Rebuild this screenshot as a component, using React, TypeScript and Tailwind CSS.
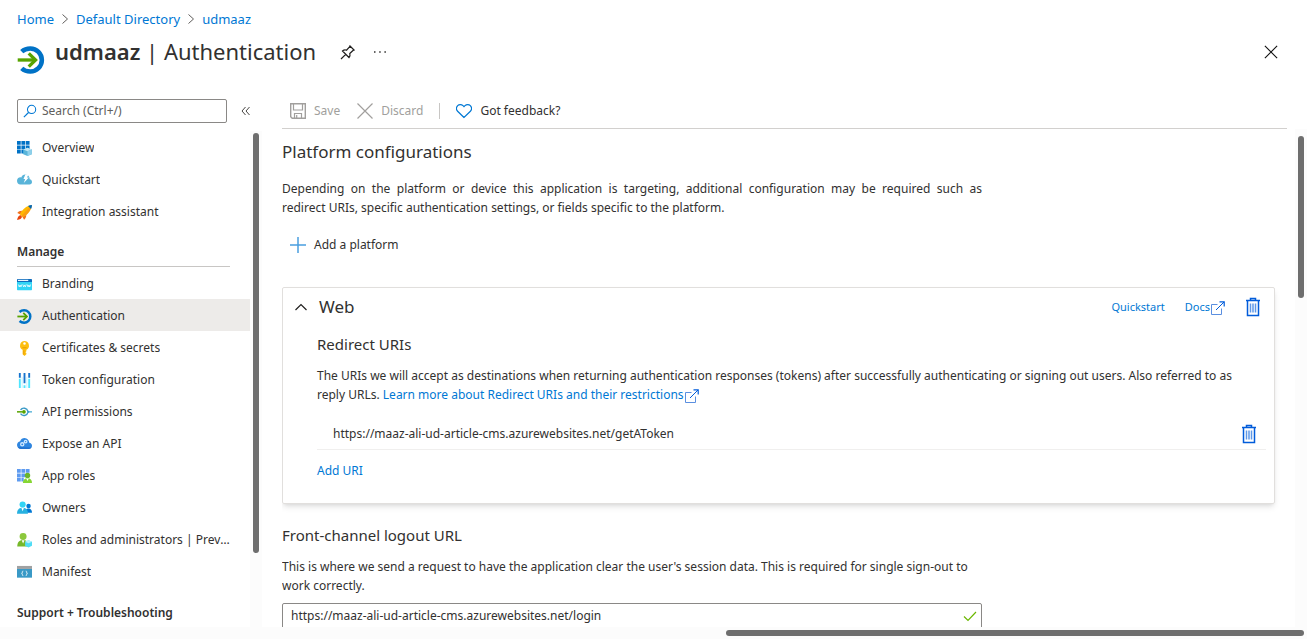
import type { ReactNode, SVGProps } from 'react';

type IconProps = SVGProps<SVGSVGElement>;

function Svg({ children, ...props }: IconProps & { children: ReactNode }) {
  return (
    <svg viewBox="0 0 16 16" fill="none" aria-hidden="true" {...props}>
      {children}
    </svg>
  );
}

const AuthIcon = (p: IconProps) => (
  <Svg {...p}>
    <path d="M2.700 3.200C4 2 5.600 1.400 7.600 1.400a6.600 6.600 0 0 1 0 13.200c-2 0-3.600-.6-4.900-1.800" stroke="#0072c6" strokeWidth="2.600" />
    <path d="M.4 8h10" stroke="#57a300" strokeWidth="1.900" />
    <path d="M6.700 4.200 10.600 8l-3.900 3.800" stroke="#57a300" strokeWidth="1.900" />
  </Svg>
);

const OverviewIcon = (p: IconProps) => (
  <Svg {...p}>
    <path fill="#0072c6" d="M0 0h4v4H0zM4.700 0h4v4h-4zM9.400 0h4v4h-4zM0 4.700h4v4H0zM4.700 4.700h4v4h-4zM9.400 4.700h4v4h-4zM0 9.400h4v4H0zM4.700 9.400h4v4h-4z" />
    <path fill="#59b4d9" d="m11.200 7.200 4.600 1.800v5L11.200 16 6.600 14V9z" />
    <path fill="#c3e7f5" d="m11.200 7.200 4.600 1.800-4.600 1.800L6.600 9z" />
    <path fill="#8fd0ea" d="m11.200 10.800 4.600-1.800v5l-4.600 2z" />
  </Svg>
);

const QuickstartIcon = (p: IconProps) => (
  <Svg {...p}>
    <path fill="#59b4d9" d="M16 9.600c0-1.600-1.100-2.700-2.500-2.900.1-2.500-1.700-5-4.600-5C6.700 1.700 5.200 3 4.600 4.700 1.900 4.100 0 6.200 0 8.300 0 10.600 1.500 12.300 3.500 12.300h9.900c1.600 0 2.600-1.200 2.600-2.700z" />
    <path fill="#fff" d="M9 1.200h3.400L10.600 4.800h2L7.200 10.600 8.700 6.500H6.900z" />
  </Svg>
);

const RocketIcon = (p: IconProps) => (
  <Svg {...p}>
    <path fill="#f2711c" d="M5.600 6.200C3.500 6 1.600 6.800.3 8.600l3.300 1.600zM9.900 10.500c.1 2.100-.7 3.900-2.400 5.200l-1.700-3.300z" />
    <path fill="#e8430c" d="M3.600 10.600C1.700 11.200.5 13 .1 16c3-.4 4.700-1.500 5.300-3.500z" />
    <path fill="#ffb900" d="M15.700.3C10.400 1 6.500 3.600 3 9.900L6.200 13C12.500 9.600 15 5.500 15.700.3z" />
    <path fill="#f78d1e" d="M4.600 11.500 6.200 13C12.500 9.600 15 5.500 15.700.3z" opacity=".6" />
    <path fill="#0067b8" d="M16 0c-1.600 0-3 .3-4.300 1L15 4.300c.7-1.300 1-2.700 1-4.300z" />
  </Svg>
);

const BrandingIcon = (p: IconProps) => (
  <Svg {...p}>
    <path fill="#32d4f5" d="M0 4.500h16v8.800a.7.7 0 0 1-.7.7H.7a.7.7 0 0 1-.7-.7z" />
    <path fill="#0f6cbd" d="M.7 2h14.600c.4 0 .7.3.7.7v2.500H0V2.700c0-.4.3-.7.7-.7z" />
    <path fill="#fff" d="M1 3h11v1.200H1z" />
    <path stroke="#fff" strokeWidth=".8" d="m1.500 8 .9 2.600L3.300 8.500l.9 2.100L5.100 8M6.200 8l.9 2.600.9-2.100.9 2.100.9-2.600M10.900 8l.9 2.600.9-2.100.9 2.100.9-2.600" />
  </Svg>
);

const KeyIcon = (p: IconProps) => (
  <Svg {...p}>
    <path fill="#fdbf0f" d="M8 0a4.900 4.900 0 0 0-2 9.300V14l2 2 2-2v-1.200l-1-.9 1-.9V9.300A4.900 4.900 0 0 0 8 0z" />
    <circle cx="8" cy="2.600" r="1.300" fill="#fff" />
    <path stroke="#e08a00" strokeWidth=".7" d="M5.800 7.200h4.400M7.300 10v4.500" />
  </Svg>
);

const TokenIcon = (p: IconProps) => (
  <Svg {...p}>
    <path fill="#1573ce" d="M2 0h2v5H2zM7 0h2v11H7zM12 0h2v5h-2z" />
    <path fill="#50e6ff" d="M2 6h2v10H2zM12 6h2v10h-2zM7 13h2v3H7z" />
    <path fill="#9cebff" d="M5 4h1v12H5zM10 4h1v12h-1z" opacity=".6" />
  </Svg>
);

const PermissionsIcon = (p: IconProps) => (
  <Svg {...p}>
    <path d="M3.800 5.300a4.300 4.300 0 0 1 7.800 1.500M3.800 9.300a4.300 4.300 0 0 0 7.800-1.500" stroke="#3999c6" strokeWidth="1.500" />
    <path d="M11.500 7.300H16" stroke="#59b4d9" strokeWidth="1.500" />
    <circle cx="11.900" cy="7.300" r="1.200" fill="#3999c6" />
    <path d="M0 7.300h6" stroke="#57a300" strokeWidth="1.600" />
    <circle cx="7.400" cy="7.300" r="2" fill="#57a300" />
  </Svg>
);

const ExposeIcon = (p: IconProps) => (
  <Svg {...p}>
    <path fill="#2f86e0" d="M16 9.200c0-1.700-1.300-2.900-2.900-3.100C12.900 3.300 10.900 1 8.100 1 5.900 1 4.100 2.300 3.400 4.400 1.500 4.600 0 6.300 0 8.500 0 11 1.900 12.700 4.100 12.700h8.600c1.900 0 3.300-1.500 3.300-3.500z" />
    <path fill="#1b66c4" d="M.8 10.700c.8 1.300 2 2 3.300 2h8.600c1.200 0 2.200-.6 2.800-1.500z" opacity=".6" />
    <circle cx="5.600" cy="7.800" r="1.700" stroke="#cfe8ff" strokeWidth="1.400" />
    <circle cx="9.200" cy="4.900" r="1.400" stroke="#cfe8ff" strokeWidth="1.300" />
  </Svg>
);

const AppRolesIcon = (p: IconProps) => (
  <Svg {...p}>
    <path fill="#5e9bf0" d="M0 0h4v4H0zM4.700 0h4v4h-4zM9.400 0h4v4h-4zM0 4.700h4v4H0zM4.700 4.700h4v4h-4zM0 9.400h4v4H0zM4.700 9.400h2.500v4H4.700z" />
    <circle cx="11.200" cy="7" r="2.900" fill="#6bb52b" />
    <path fill="#86d633" d="M6.300 15c0-3.200 1.700-5.200 4.900-5.200S16 11.800 16 15z" />
    <path fill="#fff" d="m9.800 10 1.400 2.700 1.400-2.700z" />
  </Svg>
);

const OwnersIcon = (p: IconProps) => (
  <Svg {...p}>
    <circle cx="12.300" cy="5.200" r="2.400" fill="#0078d4" />
    <path fill="#0078d4" d="M8.500 12.500c0-2.800 1.300-4.500 3.800-4.500s3.700 1.700 3.700 4.500z" />
    <circle cx="6" cy="3.800" r="3.300" fill="#32d4f5" />
    <path fill="#27b1e0" d="M0 13.500c0-4 2-6.200 5.900-6.200s5.800 2.200 5.800 6.200z" />
    <path fill="#fff" d="M4.600 7.300 6 11l1.400-3.700z" />
  </Svg>
);

const RolesIcon = (p: IconProps) => (
  <Svg {...p}>
    <circle cx="6.500" cy="3.800" r="3.700" fill="#8cc83c" />
    <path fill="#76b82a" d="M.3 14.300C.3 9.900 2.300 7.500 6.500 7.500s6.200 2.400 6.200 6.800z" />
    <path fill="#fff" d="m5 7.600 1.500 3.600L8 7.600z" />
    <path fill="#50dcf5" d="m12.300 7.600 3.700 1.600v4.300l-3.700 2-3.700-2V9.200z" />
    <path fill="#b5f2fc" d="m12.300 7.600 3.700 1.600-3.700 1.800-3.700-1.800z" />
  </Svg>
);

const ManifestIcon = (p: IconProps) => (
  <Svg {...p}>
    <path fill="#3999c6" d="M0 4h16v9.500H0z" />
    <path fill="#a0a1a2" d="M0 1h16v3.200H0z" />
    <path stroke="#fff" strokeWidth=".9" d="M6.700 6.500c-1 0-1 .4-1 1.200s0 1.100-.8 1.200c.8.100.8.400.8 1.200s0 1.200 1 1.200M9.300 6.500c1 0 1 .4 1 1.200s0 1.100.8 1.200c-.8.100-.8.400-.8 1.200s0 1.200-1 1.200" />
  </Svg>
);

const ChevronRight = () => (
  <Svg className="h-3 w-2 text-[#605e5c]" viewBox="0 0 8 12">
    <path d="m1.500 1.500 5 4.500-5 4.500" stroke="currentColor" />
  </Svg>
);

const PinIcon = () => (
  <Svg className="size-4">
    <path d="M9.500 1.500 14.500 6.500M10.200 2.200 6.500 6.200C5 5.700 3.700 6 2.500 7l6.500 6.500c1-1.200 1.300-2.500.8-4L13.800 5.800M5.700 10.300 1 15" stroke="#201f1e" strokeWidth="1.200" />
  </Svg>
);

const TrashIcon = () => (
  <Svg className="h-5 w-4" viewBox="0 0 16 20">
    <path d="M1 3.500h14M5.500 3V1.500h5V3" stroke="#015cda" strokeWidth="1.500" />
    <path d="M2.500 4v14.500h11V4" stroke="#015cda" strokeWidth="1.500" />
    <path d="M5.500 6.500v9M8 6.500v9M10.500 6.500v9" stroke="#5e98e8" strokeWidth="1.500" />
  </Svg>
);

const ExternalIcon = () => (
  <Svg className="ml-px inline-block size-3.5 align-[-4px]" viewBox="0 0 14 14">
    <path d="M6.500 3.500h-6v10h10v-6" stroke="#5b8fe0" />
    <path d="M5 9l8-8" stroke="#015cda" />
    <path d="M8.500.8h4.700v4.700" stroke="#015cda" strokeWidth="1.200" />
  </Svg>
);

function NavItem({ icon: Icon, label, active }: { icon: (p: IconProps) => ReactNode; label: string; active?: boolean }) {
  return (
    <li>
      <a
        href="#"
        aria-current={active ? 'page' : undefined}
        className={`flex h-8 items-center gap-2.5 pt-0.5 pr-5 pl-[17px] ${active ? 'bg-[#edebe9]' : ''}`}
      >
        <Icon className="size-[15px] shrink-0" />
        <span className="truncate">{label}</span>
      </a>
    </li>
  );
}

const topItems = [
  { icon: OverviewIcon, label: 'Overview' },
  { icon: QuickstartIcon, label: 'Quickstart' },
  { icon: RocketIcon, label: 'Integration assistant' },
];

const manageItems = [
  { icon: BrandingIcon, label: 'Branding' },
  { icon: AuthIcon, label: 'Authentication', active: true },
  { icon: KeyIcon, label: 'Certificates & secrets' },
  { icon: TokenIcon, label: 'Token configuration' },
  { icon: PermissionsIcon, label: 'API permissions' },
  { icon: ExposeIcon, label: 'Expose an API' },
  { icon: AppRolesIcon, label: 'App roles' },
  { icon: OwnersIcon, label: 'Owners' },
  { icon: RolesIcon, label: 'Roles and administrators | Preview' },
  { icon: ManifestIcon, label: 'Manifest' },
];

function Header() {
  return (
    <header className="shrink-0 pl-[17px]">
      <nav aria-label="Breadcrumb" className="flex items-center gap-[7px] pt-2 text-[13px] leading-[22px] text-[#0078d4]">
        <a href="#">Home</a>
        <ChevronRight />
        <a href="#">Default Directory</a>
        <ChevronRight />
        <a href="#">udmaaz</a>
      </nav>
      <div className="flex items-start pr-4">
        <AuthIcon className="mt-4 size-7 shrink-0" />
        <h1 className="ml-2.5 pt-1 text-[22px] leading-[34px]">
          <strong className="font-semibold">udmaaz</strong> | Authentication
        </h1>
        <div className="ml-6 flex h-11 items-center gap-4">
          <button type="button" aria-label="Pin"><PinIcon /></button>
          <button type="button" aria-label="More options">
            <Svg className="size-4">
              <path d="M2 8h1.500M7.200 8h1.500M12.400 8h1.500" stroke="currentColor" strokeWidth="1.500" />
            </Svg>
          </button>
        </div>
        <button type="button" aria-label="Close" className="ml-auto flex h-11 w-10 items-center justify-center">
          <Svg className="size-3.5">
            <path d="m1 1 14 14M15 1 1 15" stroke="#111" strokeWidth="1.300" />
          </Svg>
        </button>
      </div>
    </header>
  );
}

function Sidebar() {
  return (
    <aside className="flex w-[262px] shrink-0 flex-col">
      <div className="flex items-center gap-3.5 pb-2 pl-[17px]">
        <label className="flex h-6 w-[210px] items-center gap-[5px] rounded-xs border border-[#8a8886] px-[5px]">
          <Svg className="size-3.5 shrink-0">
            <circle cx="9.800" cy="6.200" r="4.700" stroke="#0078d4" strokeWidth="1.200" />
            <path d="M6.300 9.700 1 15" stroke="#0078d4" strokeWidth="1.300" />
          </Svg>
          <input
            type="text"
            aria-label="Search"
            placeholder="Search (Ctrl+/)"
            className="w-full min-w-0 outline-none placeholder:text-[#605e5c]"
          />
        </label>
        <button type="button" aria-label="Collapse menu">
          <Svg className="h-3 w-2.5" viewBox="0 0 10 12">
            <path d="M4.500 2 1 6l3.500 4M8.500 2 5 6l3.500 4" stroke="#484644" />
          </Svg>
        </button>
      </div>
      <div className="flex min-h-0 flex-1">
        <nav aria-label="Resource menu" className="min-w-0 flex-1 overflow-hidden">
          <ul>
            {topItems.map((item) => <NavItem key={item.label} {...item} />)}
          </ul>
          <h2 className="mr-5 ml-[17px] flex h-10 items-end border-b border-[#c8c6c4] pb-1.5 font-semibold">Manage</h2>
          <ul>
            {manageItems.map((item) => <NavItem key={item.label} {...item} />)}
          </ul>
          <h2 className="mr-5 ml-[17px] pt-[18px] font-semibold">Support + Troubleshooting</h2>
        </nav>
        <div className="w-3 bg-[#fcfcfc] px-[3px] pt-0.5">
          <div className="h-[85%] rounded-full bg-[#6e6e6e]" />
        </div>
      </div>
    </aside>
  );
}

function Toolbar() {
  return (
    <div className="mr-5 flex shrink-0 items-center border-b border-[#d2d0ce] pb-[5px] pl-2">
      <button type="button" disabled className="flex h-6 items-center gap-2 text-[#a19f9d]">
        <Svg className="size-4">
          <path d="M.7.7h14.600v14.600H2.200L.7 13.800z" stroke="currentColor" strokeWidth="1.400" />
          <path d="M3.500 1v6h9V1M4.500 15v-4.500h7V15M6.700 12v3" stroke="currentColor" strokeWidth="1.200" />
        </Svg>
        Save
      </button>
      <button type="button" disabled className="ml-[17px] flex h-6 items-center gap-2 text-[#a19f9d]">
        <Svg className="size-4">
          <path d="m.5.5 15 15M15.500.5l-15 15" stroke="currentColor" strokeWidth="1.200" />
        </Svg>
        Discard
      </button>
      <div className="mx-4 h-4 w-px bg-[#c8c6c4]" />
      <button type="button" className="flex h-6 items-center gap-2">
        <Svg className="size-4">
          <path d="M8 14.500 1.600 8.200a3.800 3.800 0 0 1 0-5.500 3.800 3.800 0 0 1 5.400 0l1 1 1-1a3.800 3.800 0 0 1 5.400 0 3.800 3.800 0 0 1 0 5.500z" stroke="#0078d4" strokeWidth="1.200" />
        </Svg>
        Got feedback?
      </button>
    </div>
  );
}

function WebCard() {
  return (
    <section className="mt-[30px] rounded-xs border border-[#e1dfdd] pt-[5px] pr-2 pb-5 shadow-md">
      <div className="flex h-7 items-center">
        <button type="button" aria-expanded="true" className="flex items-center gap-3 pl-3 text-[17px]">
          <Svg className="size-3" viewBox="0 0 12 12">
            <path d="m.5 9 5.500-5.500L11.500 9" stroke="#201f1e" strokeWidth="1.200" />
          </Svg>
          Web
        </button>
        <div className="ml-auto flex items-center gap-5 text-[11px] text-[#0078d4]">
          <a href="#">Quickstart</a>
          <a href="#">Docs<ExternalIcon /></a>
          <button type="button" aria-label="Delete Web platform" className="mr-[5px]"><TrashIcon /></button>
        </div>
      </div>
      <div className="pl-[34px]">
        <h3 className="mt-[11px] text-[15px] leading-6">Redirect URIs</h3>
        <p className="mt-2.5 pr-4 leading-[19px]">
          The URIs we will accept as destinations when returning authentication responses (tokens) after successfully
          authenticating or signing out users. Also referred to as reply URLs.{' '}
          <a href="#" className="text-[#0078d4]">Learn more about Redirect URIs and their restrictions<ExternalIcon /></a>
        </p>
        <div className="mt-3.5 flex h-8 items-center justify-between border-b border-[#f0efee] pr-[9px] pl-4">
          <span>https://maaz-ali-ud-article-cms.azurewebsites.net/getAToken</span>
          <button type="button" aria-label="Delete redirect URI"><TrashIcon /></button>
        </div>
        <button type="button" className="mt-[9px] block h-6 text-[#0078d4]">Add URI</button>
      </div>
    </section>
  );
}

export default function App() {
  return (
    <div className="flex h-screen flex-col overflow-hidden bg-white font-['Noto_Sans',sans-serif] text-xs text-[#323130]">
      <Header />
      <div className="mt-[25px] flex min-h-0 flex-1">
        <Sidebar />
        <main className="ml-5 flex min-w-0 flex-1 flex-col">
          <Toolbar />
          <div className="flex min-h-0 flex-1">
            <div className="min-w-0 flex-1 overflow-hidden pr-5">
              <h2 className="mt-[11px] text-[17px] leading-6">Platform configurations</h2>
              <p className="mt-[15px] max-w-[700px] text-justify leading-[19px]">
                Depending on the platform or device this application is targeting, additional configuration may be
                required such as redirect&nbsp;URIs, specific authentication settings, or fields specific to the platform.
              </p>
              <button type="button" className="mt-4 flex h-6 items-center gap-2 pl-2">
                <Svg className="size-4">
                  <path d="M8 0v16M0 8h16" stroke="#4a9fe0" strokeWidth="1.500" />
                </Svg>
                Add a platform
              </button>
              <WebCard />
              <h2 className="mt-[19px] text-[15px] leading-6">Front-channel logout URL</h2>
              <p className="mt-2.5 max-w-[700px] leading-[19px]">
                This is where we send a request to have the application clear the user's session data. This is required
                for single sign-out to work correctly.
              </p>
              <label className="mt-2 flex h-[26px] max-w-[700px] items-center rounded-xs border border-[#8a8886] pr-1 pl-2">
                <input
                  type="text"
                  aria-label="Front-channel logout URL"
                  defaultValue="https://maaz-ali-ud-article-cms.azurewebsites.net/login"
                  className="min-w-0 flex-1 outline-none"
                />
                <Svg className="h-3 w-3.5 shrink-0" viewBox="0 0 14 12">
                  <path d="m1 6.500 4 4L13 2" stroke="#6bb700" strokeWidth="1.200" />
                </Svg>
              </label>
            </div>
            <div className="w-3 shrink-0 bg-[#fcfcfc] px-[3px] pt-[7px]">
              <div className="h-[33%] rounded-full bg-[#6e6e6e]" />
            </div>
          </div>
        </main>
      </div>
      <div className="flex h-3 shrink-0 items-center justify-end bg-[#fcfcfc] px-[3px]">
        <div className="h-1.5 w-4/9 rounded-full bg-[#6e6e6e]" />
      </div>
    </div>
  );
}
